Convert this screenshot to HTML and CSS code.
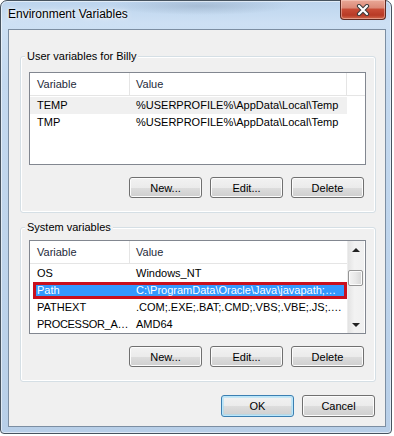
FILE: index.html
```html
<!DOCTYPE html>
<html>
    <head>
        <meta name="viewport" content="width=device-width"/>
        <title>Environment Variables</title>
        <link rel="stylesheet" href="styles.css">
    </head>
    <body>
        <div class="window">
            <div class="titlebar">
                <span class="title">Environment Variables</span>
                <div class="close">
                    <svg width="14" height="12" viewBox="0 0 14 12">
                        <path d="M3 2 L11 10 M11 2 L3 10" stroke="#3b3b3b" stroke-width="4.2" stroke-linecap="round"/>
                        <path d="M3 2 L11 10 M11 2 L3 10" stroke="#fff" stroke-width="2.2" stroke-linecap="round"/>
                    </svg>
                </div>
            </div>
            <div class="client">
                <!-- user variables -->
                <div class="group first">
                    <span class="group-label">User variables for Billy</span>
                    <div class="list user-list">
                        <div class="list-main">
                            <div class="header">
                                <span class="hcell c1">Variable</span>
                                <span class="hcell c2">Value</span>
                                <span class="hcell c3"></span>
                            </div>
                            <div class="rows">
                                <div class="row soft"><span class="cell c1">TEMP</span><span class="cell c2">%USERPROFILE%\AppData\Local\Temp</span></div>
                                <div class="row"><span class="cell c1">TMP</span><span class="cell c2">%USERPROFILE%\AppData\Local\Temp</span></div>
                            </div>
                        </div>
                    </div>
                    <div class="buttons">
                        <button class="btn">New...</button>
                        <button class="btn">Edit...</button>
                        <button class="btn">Delete</button>
                    </div>
                </div>
                <!-- system variables -->
                <div class="group second">
                    <span class="group-label">System variables</span>
                    <div class="list sys-list">
                        <div class="list-main">
                            <div class="header">
                                <span class="hcell c1">Variable</span>
                                <span class="hcell c2">Value</span>
                            </div>
                            <div class="rows">
                                <div class="row"><span class="cell c1">OS</span><span class="cell c2">Windows_NT</span></div>
                                <div class="row sel"><span class="cell c1">Path</span><span class="cell c2">C:\ProgramData\Oracle\Java\javapath;…</span></div>
                                <div class="row"><span class="cell c1">PATHEXT</span><span class="cell c2">.COM;.EXE;.BAT;.CMD;.VBS;.VBE;.JS;.…</span></div>
                                <div class="row"><span class="cell c1 tight">PROCESSOR_A…</span><span class="cell c2">AMD64</span></div>
                            </div>
                        </div>
                        <div class="scrollbar">
                            <div class="sb-btn"><span class="arrow up"></span></div>
                            <div class="sb-track"><div class="sb-thumb"></div></div>
                            <div class="sb-btn"><span class="arrow down"></span></div>
                        </div>
                    </div>
                    <div class="buttons">
                        <button class="btn">New...</button>
                        <button class="btn">Edit...</button>
                        <button class="btn">Delete</button>
                    </div>
                </div>
                <div class="footer">
                    <button class="btn default">OK</button>
                    <button class="btn">Cancel</button>
                </div>
            </div>
        </div>
    </body>
</html>
```

FILE: styles.css
```css
body {
    margin: 0;
    background: #fff;
    font-family: "Liberation Sans", Arial, sans-serif;
    font-size: 11px;
    color: #000;
}
.window {
    box-sizing: border-box;
    width: 392px;
    height: 434px;
    display: flex;
    flex-direction: column;
    border: 1px solid #47535f;
    border-radius: 7px 7px 4px 4px;
    background:
        radial-gradient(ellipse 90px 9px at 200px 5px, rgba(120, 140, 165, .35), rgba(120, 140, 165, 0)),
        linear-gradient(180deg, #bcd4ed 0, #cde0f4 22px, #c4d9ef 80px, #b8cfe8 100%);
    box-shadow: inset 0 0 0 1px rgba(255, 255, 255, .55);
}
.titlebar {
    height: 28px;
    display: flex;
    justify-content: space-between;
    align-items: flex-start;
}
.title {
    padding: 6px 0 0 7px;
    font-size: 12px;
    line-height: 15px;
    text-shadow: 0 0 6px #fff, 0 0 3px #fff;
}
.close {
    width: 46px;
    height: 20px;
    box-sizing: border-box;
    margin: -1px 5px 0 0;
    border: 1px solid #5e2a22;
    border-top: none;
    border-radius: 0 0 4px 4px;
    background: linear-gradient(180deg, #e9a897 0, #dc8a78 40%, #c74b35 50%, #b83a26 80%, #d16a4e 100%);
    box-shadow: inset 0 0 0 1px rgba(255, 220, 210, .45);
    display: flex;
    align-items: center;
    justify-content: center;
}
.close svg {
    display: block;
}

.client {
    flex: 1;
    margin: 0 5px 6px 7px;
    padding: 0 9px 0 11px;
    border: 1px solid #7c8ea2;
    background: #f0f0f0;
    display: flex;
    flex-direction: column;
}

/* group boxes */
.group {
    position: relative;
    border: 1px solid #d5dfe5;
    border-radius: 3px;
    padding: 15px 9px 14px 8px;
    box-shadow: inset 0 0 0 1px #fff;
}
.group.first {
    margin-top: 26px;
}
.group.second {
    margin-top: 14px;
    padding-top: 12px;
}
.group-label {
    position: absolute;
    top: -8px;
    left: 4px;
    padding: 0 2px;
    line-height: 15px;
    background: #f0f0f0;
}

/* list views */
.list {
    border: 1px solid #828790;
    background: #fff;
    display: flex;
    overflow: hidden;
}
.user-list {
    height: 93px;
    box-sizing: border-box;
}
.sys-list {
    height: 94px;
    box-sizing: border-box;
}
.list-main {
    flex: 1;
    min-width: 0;
}
.header {
    display: flex;
    height: 23px;
    box-sizing: border-box;
    border-bottom: 1px solid #e5e5e5;
    line-height: 22px;
    color: #1e2a3a;
}
.hcell {
    box-sizing: border-box;
    white-space: nowrap;
    border-right: 1px solid #e5e5e5;
}
.hcell.c1 {
    width: 100px;
    padding-left: 7px;
}
.hcell.c2 {
    width: 217px;
    padding-left: 6px;
}
.hcell.c3 {
    flex: 1;
    border-right: none;
}
.sys-list .hcell.c2 {
    flex: 1;
    border-right: none;
}
.rows {
    padding-top: 1px;
}
.row {
    display: flex;
    width: 317px;
    height: 17px;
    line-height: 17px;
    white-space: nowrap;
}
.row.soft {
    background: #f0f0f0;
}
.row.sel {
    width: 314px;
    margin-left: 3px;
    background: #3399ff;
    color: #fff;
    box-shadow: inset 0 0 0 3px #c8101e;
}
.cell {
    overflow: hidden;
    box-sizing: border-box;
}
.cell.c1 {
    width: 99px;
    padding-left: 7px;
}
.cell.c2 {
    flex: 1;
    padding-left: 7px;
}
.cell.tight {
    letter-spacing: -0.3px;
}
.row.sel .cell.c1 {
    width: 96px;
    padding-left: 4px;
}

/* scrollbar */
.scrollbar {
    width: 17px;
    margin-right: 1px;
    display: flex;
    flex-direction: column;
    background: linear-gradient(90deg, #e3e3e3, #f2f2f2 40%, #f0f0f0);
    border-left: 1px solid #ededed;
    box-sizing: border-box;
}
.sb-btn {
    height: 17px;
    display: flex;
    align-items: center;
    justify-content: center;
}
.arrow {
    width: 0;
    height: 0;
    border-left: 4px solid transparent;
    border-right: 4px solid transparent;
}
.arrow.up {
    border-bottom: 4px solid #222;
}
.arrow.down {
    border-top: 4px solid #222;
}
.sb-track {
    flex: 1;
}
.sb-thumb {
    margin: 12px 1px 0 0;
    height: 16px;
    box-sizing: border-box;
    border: 1px solid #959595;
    border-radius: 2px;
    background: linear-gradient(90deg, #f3f3f3, #e8e8e8 50%, #d6d6d6);
    box-shadow: inset 0 0 0 1px #fbfbfb;
}

/* buttons */
.buttons {
    display: flex;
    justify-content: flex-end;
    gap: 8px;
    margin-top: 12px;
    padding-right: 2px;
}
.footer {
    display: flex;
    justify-content: flex-end;
    gap: 8px;
    margin-top: 13px;
    padding-right: 1px;
}
.btn {
    width: 73px;
    height: 21px;
    box-sizing: border-box;
    padding: 0;
    border: 1px solid #707070;
    border-radius: 3px;
    font-family: "Liberation Sans", Arial, sans-serif;
    font-size: 11px;
    color: #000;
    background: linear-gradient(180deg, #f2f2f2 0, #ebebeb 50%, #dddddd 50%, #cfcfcf 100%);
    box-shadow: inset 0 0 0 1px #fcfcfc;
}
.footer .btn {
    height: 22px;
}
.btn.default {
    border-color: #3c7fb1;
    box-shadow: inset 0 0 0 1px #b9e6fb, inset 0 0 0 2px rgba(160, 220, 245, .5);
}
```
